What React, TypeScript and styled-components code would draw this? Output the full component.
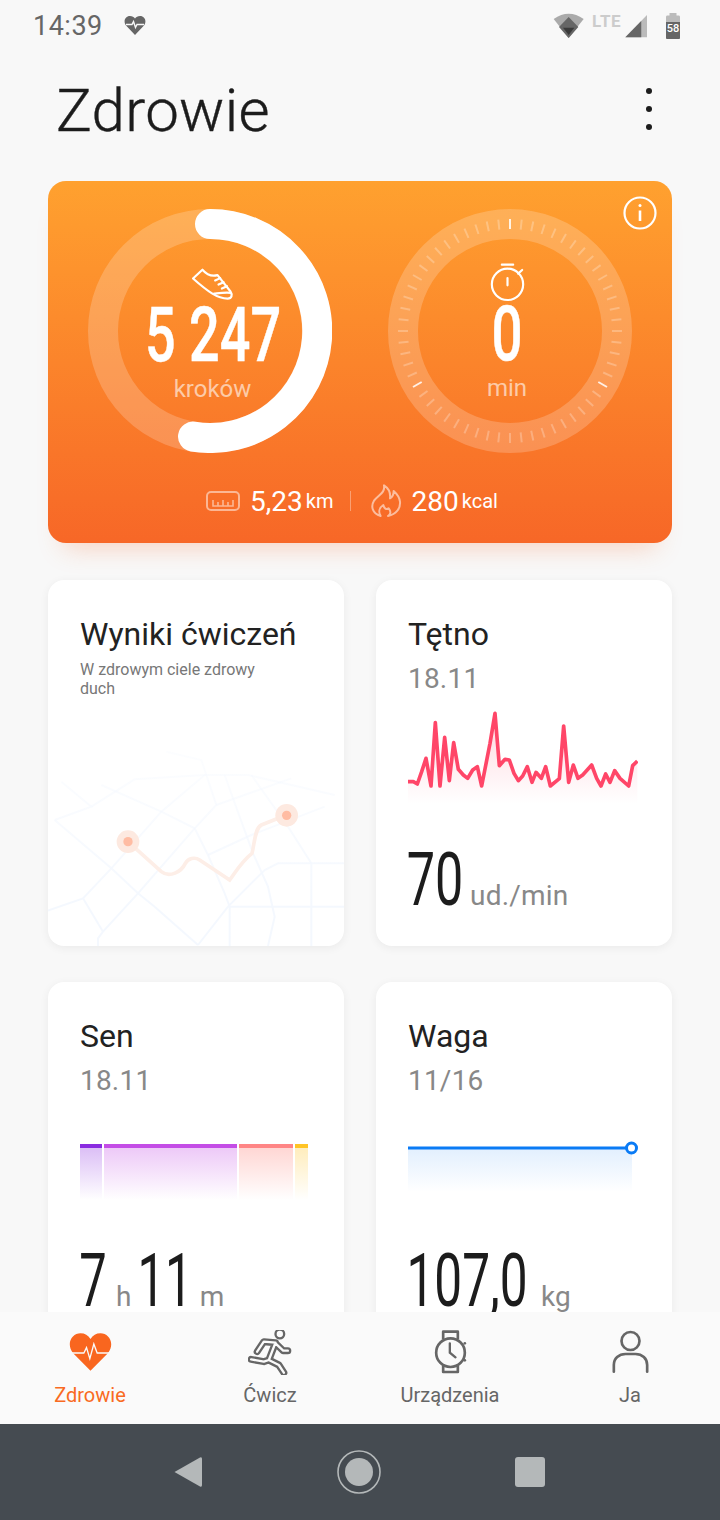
import * as React from 'react'
import styled, { createGlobalStyle } from 'styled-components'

const GlobalStyle = createGlobalStyle`
  html, body {
    margin: 0;
    padding: 0;
    background: #f8f8f8;
    font-family: Roboto, "Liberation Sans", sans-serif;
  }
`

const Screen = styled.div`
  width: 720px;
  height: 1520px;
  display: flex;
  flex-direction: column;
  overflow: hidden;
  background: #f8f8f8;
`

const Scroller = styled.main`
  flex: 1;
  min-height: 0;
  overflow: hidden;
`

const StatusBar = styled.div`
  height: 52px;
  display: flex;
  align-items: center;
  padding: 0 40px 0 33px;
  color: #666;
`

const Time = styled.span`
  font-size: 27px;
  letter-spacing: 0.5px;
  margin-right: 21px;
`

const StatusRight = styled.div`
  margin-left: auto;
  display: flex;
  align-items: flex-start;
`

const Lte = styled.span`
  font-size: 17px;
  font-weight: 700;
  line-height: 14px;
  width: 30px;
  margin: 0 3px 0 7px;
  color: #ccc;
  letter-spacing: 0.6px;
  transform: translateY(1px);
`

const TitleRow = styled.header`
  height: 108px;
  display: flex;
  align-items: flex-start;
  justify-content: space-between;
  padding: 23px 68px 0 56px;
  box-sizing: border-box;
`

const Title = styled.h1`
  margin: 0;
  font-size: 60px;
  line-height: 72px;
  font-weight: 300;
  letter-spacing: 0.3px;
  color: #1c1c1c;
  -webkit-text-stroke: 0.4px #1c1c1c;
`

const MoreButton = styled.div`
  display: flex;
  flex-direction: column;
  gap: 12px;
  margin-top: 13px;
`

const Dot = styled.span`
  width: 6px;
  height: 6px;
  border-radius: 50%;
  background: #1c1c1c;
`

const HeroCard = styled.section`
  position: relative;
  margin: 21px 48px 0;
  height: 362px;
  box-sizing: border-box;
  padding: 28px 40px 0;
  border-radius: 18px;
  color: #fff;
  background: linear-gradient(180deg, #ffa12f 0%, #f76727 100%);
  box-shadow: 0 20px 26px -16px rgba(247, 103, 39, 0.28);
`

const InfoIcon = styled.svg`
  position: absolute;
  top: 15px;
  right: 15px;
`

const Rings = styled.div`
  display: flex;
  gap: 56px;
`

const Ring = styled.div`
  width: 244px;
  height: 244px;
  display: grid;
  & > * {
    grid-area: 1 / 1;
  }
`

const RingCenter = styled.div<{ $top: number; $shift: number }>`
  display: flex;
  flex-direction: column;
  align-items: center;
  padding-top: ${(p) => p.$top}px;
  padding-left: ${(p) => Math.max(p.$shift, 0)}px;
  padding-right: ${(p) => Math.max(-p.$shift, 0)}px;
`

const RingLabel = styled.span`
  font-size: 24px;
  line-height: 28px;
  margin-top: 9px;
  color: rgba(255, 255, 255, 0.6);
`

const Digits = styled.span<{ $w: number; $sx: number; $size: number; $weight?: number }>`
  display: inline-flex;
  justify-content: center;
  width: ${(p) => p.$w}px;
  font-size: ${(p) => p.$size}px;
  line-height: ${(p) => Math.round(p.$size * 0.8)}px;
  font-weight: ${(p) => p.$weight ?? 500};
  white-space: pre;
  transform: scaleX(${(p) => p.$sx});
`

const RingDigits = styled(Digits)`
  margin-top: 2px;
  -webkit-text-stroke: 0.5px #fff;
`

const Stats = styled.div`
  display: flex;
  align-items: center;
  justify-content: center;
  height: 40px;
  margin: 28px 16px 0 0;
`

const StatValue = styled.span`
  font-size: 28px;
  margin-left: 10px;
`

const StatUnit = styled.span`
  font-size: 20px;
  margin-left: 3px;
`

const StatDivider = styled.span`
  width: 1px;
  height: 20px;
  margin: 0 19px 0 16px;
  background: rgba(255, 255, 255, 0.35);
`

const CardGrid = styled.div`
  display: grid;
  grid-template-columns: 296px 296px;
  gap: 36px 32px;
  padding: 37px 48px 0;
`

const Card = styled.article`
  height: 366px;
  display: flex;
  flex-direction: column;
  border-radius: 16px;
  background: #fff;
  overflow: hidden;
  box-shadow: 0 2px 10px rgba(0, 0, 0, 0.06);
`

const CardHead = styled.div`
  padding: 34px 32px 0;
`

const CardTitle = styled.h2`
  margin: 0;
  font-size: 32px;
  line-height: 40px;
  font-weight: 400;
  color: #222;
`

const CardDate = styled.div`
  font-size: 28px;
  line-height: 34px;
  margin-top: 8px;
  letter-spacing: 0.2px;
  color: #888;
`

const CardNote = styled.p`
  margin: 6px 0 0;
  width: 190px;
  font-size: 16px;
  line-height: 19px;
  color: #777;
`

const MapArt = styled.svg`
  display: block;
  margin-top: auto;
`

const Chart = styled.svg`
  display: block;
  margin: ${(p: { $top: number }) => p.$top}px 0 0 32px;
`

const SleepChart = styled.div`
  display: flex;
  gap: 2px;
  width: 228px;
  height: 56px;
  margin: 46px 0 0 32px;
`

const SleepBar = styled.div<{ $w: number; $line: string; $fill: string }>`
  width: ${(p) => p.$w}px;
  border-top: 4px solid ${(p) => p.$line};
  background: linear-gradient(180deg, ${(p) => p.$fill}, rgba(255, 255, 255, 0));
`

const Reading = styled.div`
  display: flex;
  align-items: baseline;
  padding-left: 32px;
  margin-top: ${(p: { $top: number }) => p.$top}px;
  color: #1c1c1c;
`

const Unit = styled.span`
  font-size: 28px;
  letter-spacing: 0.2px;
  color: #888;
  margin: 0 ${(p: { $after?: number }) => p.$after ?? 0}px 0 ${(p: { $before?: number }) => p.$before ?? 0}px;
`

const TabBar = styled.nav`
  height: 112px;
  display: grid;
  grid-template-columns: repeat(4, 1fr);
  background: #fafafa;
`

const Tab = styled.div`
  display: flex;
  flex-direction: column;
  align-items: center;
  padding-top: 18px;
  font-size: 20px;
  line-height: 24px;
  color: ${(p: { $active?: boolean }) => (p.$active ? '#f96a22' : '#666')};
`

const TabLabel = styled.span`
  margin-top: 8px;
`

const SystemNav = styled.div`
  height: 96px;
  box-sizing: border-box;
  display: flex;
  align-items: center;
  justify-content: space-between;
  padding: 0 175px 0 174px;
  background: #454b51;
`

const StatusHeart = styled.svg`
  margin-top: -2px;
`

const ticks = Array.from({ length: 60 }, (_, i) => i * 6)

const heartPoints =
  '24,245 40,245 52,252 65,215 78,175 93,258 106,68 120,258 134,112 148,242 161,128 175,208 190,225 203,235 218,210 232,200 245,258 270,130 285,40 298,197 315,178 328,180 342,220 355,242 368,228 382,200 396,247 408,217 424,235 437,200 451,258 478,236 491,78 506,247 520,195 534,235 548,225 575,195 590,235 603,258 617,222 630,247 644,212 660,235 686,258 698,197 712,183'

const sleepBars = [
  { w: 22, line: '#8a2be0', fill: 'rgba(138,43,224,0.3)' },
  { w: 133, line: '#c44de6', fill: 'rgba(196,77,230,0.3)' },
  { w: 54, line: '#ff8585', fill: 'rgba(255,110,100,0.28)' },
  { w: 13, line: '#ffc425', fill: 'rgba(255,196,37,0.3)' },
]

const mapRoads = [
  'M355 155 L460 180 L505 315 L440 385 L270 580 L165 695 L150 715 V738',
  'M160 255 L340 335 L440 385 L480 465 L530 580 L545 620 L545 738',
  'M40 245 L130 320 L20 360',
  'M20 360 L190 505 L270 580 L320 620 L450 735',
  'M130 320 L260 238 L470 225 L600 225 L860 285',
  'M0 632 L105 595 L190 505 L340 335 L470 225',
  'M105 595 L165 695',
  'M505 315 L730 235',
  'M530 225 L555 295 L615 460 L660 560 L680 650 L660 738',
  'M480 465 L610 405 L830 320',
  'M450 735 L540 620 L650 510 L690 490 L888 490',
  'M540 620 H888',
  'M790 490 V738',
  'M610 225 L720 380 L790 490',
]

const runnerBody =
  'M770 125 L790 95 L825 98 L805 150 L835 165 L850 188 M825 100 L848 122 H862 M805 150 L790 155 L752 148'

const tabBox = (cx: number) => `${cx - 67.5} 60 135 135`

export default function App() {
  return (
    <Screen>
      <GlobalStyle />
      <Scroller>
        <StatusBar>
          <Time>14:39</Time>
          <StatusHeart width="22" height="20" viewBox="0 0 22 20">
            <path d="M11 20 L2 10.5 C-1 6.5 1 1 6 1 C8.2 1 10 2 11 3.6 C12 2 13.8 1 16 1 C21 1 23 6.5 20 10.5 Z" fill="#666" />
            <path d="M2 9.5 H8 L9.5 6.5 L11.5 12.5 L13 9.5 H20" fill="none" stroke="#f8f8f8" strokeWidth="1.4" />
          </StatusHeart>
          <StatusRight>
            <svg width="32" height="26" viewBox="72 40 92 78">
              <path d="M72 58 Q117 26 162 58 L117 115 Z" fill="#aaa" />
              <path d="M117 52 L146 82 L117 115 L88 82 Z" fill="#666" />
              <path d="M100 84 H134 L117 106 Z" fill="#3a3a3a" />
            </svg>
            <Lte>LTE</Lte>
            <svg width="23" height="23" viewBox="288 47 66 68" style={{ marginTop: 2 }}>
              <path d="M288 113 L352 47 V113 Z" fill="#bbb" />
              <path d="M288 113 L335 64.5 V113 Z" fill="#666" />
            </svg>
            <svg width="14" height="26" viewBox="0 0 14 26" style={{ marginLeft: 18 }}>
              <path d="M3.5 0 H10.5 V2.5 H13 Q14 2.5 14 4 V24.5 Q14 26 13 26 H1 Q0 26 0 24.5 V4 Q0 2.5 1 2.5 H3.5 Z" fill="#bbb" />
              <path d="M0 9 H14 V24.5 Q14 26 13 26 H1 Q0 26 0 24.5 Z" fill="#666" />
              <text x="7" y="19" fontSize="11" fontWeight="500" fontFamily="Roboto" fill="#fff" textAnchor="middle">58</text>
            </svg>
          </StatusRight>
        </StatusBar>

        <TitleRow>
          <Title>Zdrowie</Title>
          <MoreButton>
            <Dot />
            <Dot />
            <Dot />
          </MoreButton>
        </TitleRow>

        <HeroCard>
          <InfoIcon width="34" height="34" viewBox="0 0 34 34" fill="none" stroke="#fff">
            <circle cx="17" cy="17" r="15.5" strokeWidth="2.2" />
            <path d="M17 14.5 V25" strokeWidth="2.6" />
            <circle cx="17" cy="9.5" r="1.5" fill="#fff" stroke="none" />
          </InfoIcon>
          <Rings>
            <Ring>
              <svg width="244" height="244" viewBox="0 0 244 244" fill="none">
                <circle cx="122" cy="122" r="107" stroke="rgba(255,255,255,0.2)" strokeWidth="30" />
                <path d="M122 15 A107 107 0 1 1 105 227.6" stroke="#fff" strokeWidth="30" strokeLinecap="round" />
              </svg>
              <RingCenter $top={57} $shift={5}>
                <svg width="47" height="37" viewBox="425 255 140 110" fill="none" stroke="#fff" strokeWidth="6.5" strokeLinejoin="round" strokeLinecap="round">
                  <path d="M437 292 L465 266 C478 281 495 286 510 282 L548 330 C556 342 552 352 540 352 C510 352 480 330 437 292 Z" />
                  <path d="M500 337 C520 335 535 333 550 335" />
                  <path d="M503 298 L518 291 M513 310 L528 303 M523 322 L538 315" />
                </svg>
                <RingDigits $w={132} $sx={0.71} $size={76}>5 247</RingDigits>
                <RingLabel>kroków</RingLabel>
              </RingCenter>
            </Ring>
            <Ring>
              <svg width="244" height="244" viewBox="0 0 244 244" fill="none">
                <circle cx="122" cy="122" r="107" stroke="rgba(255,255,255,0.2)" strokeWidth="30" />
                {ticks.map((deg) => {
                  const strong = deg === 0 || deg === 120 || deg === 240
                  return (
                    <line
                      key={deg}
                      x1="122"
                      y1="10"
                      x2="122"
                      y2="20"
                      stroke="#fff"
                      strokeWidth="2"
                      strokeOpacity={strong ? 0.85 : 0.25}
                      transform={`rotate(${deg} 122 122)`}
                    />
                  )
                })}
              </svg>
              <RingCenter $top={53} $shift={-6}>
                <svg width="37" height="40" viewBox="385 248 110 120" fill="none" stroke="#fff" strokeLinecap="round">
                  <circle cx="440" cy="315" r="47" strokeWidth="6.5" />
                  <path d="M423 256 H457" strokeWidth="6.5" />
                  <path d="M440 296 V318" strokeWidth="6.5" />
                  <path d="M472 283 L484 272" strokeWidth="6.5" />
                </svg>
                <RingDigits $w={26} $sx={0.72} $size={76}>0</RingDigits>
                <RingLabel>min</RingLabel>
              </RingCenter>
            </Ring>
          </Rings>
          <Stats>
            <svg width="34" height="20" viewBox="0 0 34 20" fill="none" stroke="rgba(255,255,255,0.5)" strokeWidth="2">
              <rect x="1" y="1" width="32" height="18" rx="4" />
              <path d="M7 9 V15 H27 V9 M12 11 V15 M17 9 V15 M22 11 V15" strokeWidth="1.6" />
            </svg>
            <StatValue>5,23</StatValue>
            <StatUnit>km</StatUnit>
            <StatDivider />
            <svg width="32" height="34" viewBox="26 912 96 102" fill="none" stroke="rgba(255,255,255,0.55)" strokeWidth="6" strokeLinejoin="round">
              <path d="M68 916 C72 940 50 945 38 962 C28 978 32 1000 58 1008 C50 995 55 982 66 975 C68 985 75 990 82 985 C90 995 88 1003 80 1008 C105 1003 118 985 116 965 C114 950 105 940 97 933 C97 945 92 952 86 955 C88 940 82 925 68 916 Z" />
            </svg>
            <StatValue>280</StatValue>
            <StatUnit>kcal</StatUnit>
          </Stats>
        </HeroCard>

        <CardGrid>
          <Card>
            <CardHead>
              <CardTitle>Wyniki ćwiczeń</CardTitle>
              <CardNote>W zdrowym ciele zdrowy duch</CardNote>
            </CardHead>
            <MapArt width="296" height="246" viewBox="0 0 888 738" fill="none">
              <defs>
                <linearGradient id="roadFade" gradientUnits="userSpaceOnUse" x1="0" y1="150" x2="0" y2="620">
                  <stop offset="0" stopColor="#f4f8fe" stopOpacity="0.25" />
                  <stop offset="1" stopColor="#f4f8fe" stopOpacity="1" />
                </linearGradient>
              </defs>
              {mapRoads.map((d) => (
                <path key={d} d={d} stroke="url(#roadFade)" strokeWidth="6" />
              ))}
              <path
                d="M240 425 L340 515 C365 535 400 515 412 490 C420 475 440 470 455 480 L545 540 C560 520 580 485 612 460 C620 430 620 385 640 375 L715 345"
                stroke="#fdeee7"
                strokeWidth="11"
              />
              <circle cx="240" cy="425" r="34" fill="#fde9e0" />
              <circle cx="240" cy="425" r="14" fill="#ffbca3" />
              <circle cx="716" cy="346" r="34" fill="#fde9e0" />
              <circle cx="716" cy="346" r="14" fill="#ffbca3" />
            </MapArt>
          </Card>

          <Card>
            <CardHead>
              <CardTitle>Tętno</CardTitle>
              <CardDate>18.11</CardDate>
            </CardHead>
            <Chart $top={4} width="230" height="110" viewBox="24 0 690 330" fill="none">
              <defs>
                <linearGradient id="pulseFill" x1="0" y1="0" x2="0" y2="1">
                  <stop offset="0" stopColor="#ff4668" stopOpacity="0.22" />
                  <stop offset="1" stopColor="#ff4668" stopOpacity="0" />
                </linearGradient>
              </defs>
              <polygon points={`${heartPoints} 712,310 24,310`} fill="url(#pulseFill)" />
              <polyline points={heartPoints} stroke="#ff4668" strokeWidth="11" strokeLinejoin="round" />
            </Chart>
            <Reading $top={40}>
              <Digits $w={54} $sx={0.68} $size={74} $weight={400}>70</Digits>
              <Unit $before={8}>ud./min</Unit>
            </Reading>
          </Card>

          <Card>
            <CardHead>
              <CardTitle>Sen</CardTitle>
              <CardDate>18.11</CardDate>
            </CardHead>
            <SleepChart>
              {sleepBars.map((bar) => (
                <SleepBar key={bar.line} $w={bar.w} $line={bar.line} $fill={bar.fill} />
              ))}
            </SleepChart>
            <Reading $top={51}>
              <Digits $w={26} $sx={0.66} $size={74} $weight={400}>7</Digits>
              <Unit $before={10} $after={8}>h</Unit>
              <Digits $w={50} $sx={0.66} $size={74} $weight={400}>11</Digits>
              <Unit $before={10}>m</Unit>
            </Reading>
          </Card>

          <Card>
            <CardHead>
              <CardTitle>Waga</CardTitle>
              <CardDate>11/16</CardDate>
            </CardHead>
            <Chart $top={42} width="232" height="60" viewBox="0 0 232 60" fill="none">
              <defs>
                <linearGradient id="weightFill" x1="0" y1="0" x2="0" y2="1">
                  <stop offset="0" stopColor="#0a7bf5" stopOpacity="0.12" />
                  <stop offset="1" stopColor="#0a7bf5" stopOpacity="0" />
                </linearGradient>
              </defs>
              <rect x="0" y="8" width="224" height="44" fill="url(#weightFill)" />
              <path d="M0 8 H219" stroke="#0a7bf5" strokeWidth="3" />
              <circle cx="223.5" cy="8" r="5" fill="#fff" stroke="#0a7bf5" strokeWidth="3" />
            </Chart>
            <Reading $top={51}>
              <Digits $w={118} $sx={0.67} $size={74} $weight={400}>107,0</Digits>
              <Unit $before={15}>kg</Unit>
            </Reading>
          </Card>
        </CardGrid>
      </Scroller>

      <TabBar>
        <Tab $active>
          <svg width="45" height="45" viewBox={tabBox(270)} fill="none">
            <path d="M270 182 L218 130 C195 100 215 70 240 70 C253 70 263 76 270 87 C277 76 287 70 300 70 C325 70 345 100 322 130 Z" fill="#f9661f" />
            <path d="M207 129 H250 L258 113 L268 146 L280 102 L290 129 H333" stroke="#fafafa" strokeWidth="4" />
          </svg>
          <TabLabel>Zdrowie</TabLabel>
        </Tab>
        <Tab>
          <svg width="45" height="45" viewBox={tabBox(810)} fill="none" strokeLinecap="round" strokeLinejoin="round">
            <circle cx="838" cy="72" r="13" stroke="#666" strokeWidth="7" />
            <path d={runnerBody} stroke="#666" strokeWidth="21" />
            <path d={runnerBody} stroke="#fafafa" strokeWidth="7" />
          </svg>
          <TabLabel>Ćwicz</TabLabel>
        </Tab>
        <Tab>
          <svg width="45" height="45" viewBox={tabBox(270)} fill="none" stroke="#666">
            <circle cx="270" cy="128" r="43" strokeWidth="8" />
            <path d="M248 88 V65 H292 V88 M248 168 V186 H292 V168" strokeWidth="8" strokeLinejoin="round" />
            <path d="M268 100 V128 L285 142" strokeWidth="7" strokeLinecap="round" />
            <circle cx="313" cy="100" r="4" fill="#666" stroke="none" />
            <circle cx="313" cy="151" r="4" fill="#666" stroke="none" />
          </svg>
          <TabLabel>Urządzenia</TabLabel>
        </Tab>
        <Tab>
          <svg width="45" height="45" viewBox={tabBox(810)} fill="none" stroke="#666" strokeWidth="8" strokeLinecap="round">
            <circle cx="810" cy="93" r="27" />
            <path d="M760 185 V165 C760 145 775 132 795 132 H825 C845 132 860 145 860 165 V185" />
          </svg>
          <TabLabel>Ja</TabLabel>
        </Tab>
      </TabBar>

      <SystemNav>
        <svg width="28" height="32" viewBox="0 0 28 32">
          <path d="M0.5 16 L26 1.5 Q28 0.5 28 3 V29 Q28 31.5 26 30.5 Z" fill="#b4b8b9" />
        </svg>
        <svg width="44" height="44" viewBox="0 0 44 44">
          <circle cx="22" cy="22" r="21" fill="none" stroke="#b4b8b9" strokeWidth="1.6" />
          <circle cx="22" cy="22" r="14" fill="#b4b8b9" />
        </svg>
        <svg width="30" height="30" viewBox="0 0 30 30">
          <rect width="30" height="30" rx="3" fill="#b4b8b9" />
        </svg>
      </SystemNav>
    </Screen>
  )
}
